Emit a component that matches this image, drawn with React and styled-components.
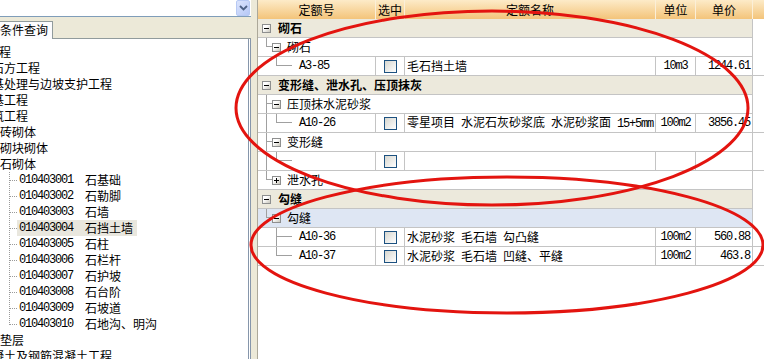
import React from "react";
import styled, { createGlobalStyle } from "styled-components";

const GRID = "#c4c4c4";
const TREE_LINE = "#a0a0a0";

const solid = (x, y, w, h, c = TREE_LINE) =>
  `linear-gradient(${c}, ${c}) ${x} ${y} / ${w} ${h} no-repeat`;
const dots = (dir, x, y, w, h, c = "#9a9a9a") =>
  `repeating-linear-gradient(${dir}, ${c} 0 1px, transparent 1px 2px) ${x} ${y} / ${w} ${h} no-repeat`;

const GlobalStyle = createGlobalStyle`
  html, body { margin: 0; padding: 0; background: #fff; overflow: hidden; }
  body {
    font-family: "Noto Sans CJK SC", "Liberation Sans", sans-serif;
    font-size: 12px;
    color: #000;
  }
`;

const leftTree = [
  { level: 0, text: "房屋建筑与装饰工程" },
  { level: 1, text: "土石方工程" },
  { level: 1, text: "地基处理与边坡支护工程" },
  { level: 1, text: "桩基工程" },
  { level: 1, text: "砌筑工程" },
  { level: 2, text: "砖砌体" },
  { level: 2, text: "砌块砌体" },
  { level: 2, text: "石砌体" },
  { level: 3, code: "010403001", text: "石基础" },
  { level: 3, code: "010403002", text: "石勒脚" },
  { level: 3, code: "010403003", text: "石墙" },
  { level: 3, code: "010403004", text: "石挡土墙", selected: true },
  { level: 3, code: "010403005", text: "石柱" },
  { level: 3, code: "010403006", text: "石栏杆" },
  { level: 3, code: "010403007", text: "石护坡" },
  { level: 3, code: "010403008", text: "石台阶" },
  { level: 3, code: "010403009", text: "石坡道" },
  { level: 3, code: "010403010", text: "石地沟、明沟", last: true },
  { level: 2, text: "垫层" },
  { level: 1, text: "混凝土及钢筋混凝土工程" },
];

const indents = { 0: -97, 1: -20, 2: 0 };

const rows = [
  { kind: "group", text: "砌石" },
  { kind: "sub", text: "砌石", rail: "L" },
  { kind: "leaf", rails: [null, "L"], code: "A3-85", name: ["毛石挡土墙"], unit: "10m3", price: "1244.61" },
  { kind: "group", text: "变形缝、泄水孔、压顶抹灰" },
  { kind: "sub", text: "压顶抹水泥砂浆", rail: "T" },
  {
    kind: "leaf",
    rails: ["I", "L"],
    code: "A10-26",
    name: ["零星项目", "水泥石灰砂浆底", "水泥砂浆面", "15+5mm"],
    unit: "100m2",
    price: "3856.45",
  },
  { kind: "sub", text: "变形缝", rail: "T" },
  { kind: "leaf", rails: ["I", "L"], code: "", name: [], unit: "", price: "" },
  { kind: "sub", text: "泄水孔", rail: "L", closed: true },
  { kind: "group", text: "勾缝" },
  { kind: "sub", text: "勾缝", rail: "L", tone: "blue" },
  { kind: "leaf", rails: [null, "T"], code: "A10-36", name: ["水泥砂浆", "毛石墙", "勾凸缝"], unit: "100m2", price: "560.88" },
  { kind: "leaf", rails: [null, "L"], code: "A10-37", name: ["水泥砂浆", "毛石墙", "凹缝、平缝"], unit: "100m2", price: "463.8" },
];

const Mono = styled.span`
  font-family: "Liberation Mono", "DejaVu Sans Mono", monospace;
  font-size: 12px;
  letter-spacing: -1.2px;
`;

const Name = ({ parts }) =>
  parts.map((p, i) => (
    <React.Fragment key={i}>
      {i > 0 && <S.Gap />}
      {/^[\x00-\x7f]+$/.test(p) ? <Mono>{p}</Mono> : p}
    </React.Fragment>
  ));

const Chevron = () => (
  <svg width="9" height="6" viewBox="0 0 9 6">
    <path d="M1 1 L4.5 4.5 L8 1" fill="none" stroke="#4d6185" strokeWidth="1.8" />
  </svg>
);

const LeftTree = () => (
  <S.TreeBox>
    {leftTree.map((item, i) =>
      item.level === 3 ? (
        <S.TreeItem key={i}>
          <S.DotRail $last={item.last} />
          <S.Label $selected={item.selected}>
            <S.Code>{item.code}</S.Code>
            {item.text}
          </S.Label>
        </S.TreeItem>
      ) : (
        <S.TreeItem key={i} $indent={indents[item.level]}>
          {item.text}
        </S.TreeItem>
      )
    )}
  </S.TreeBox>
);

const GridRow = ({ row }) => {
  if (row.kind === "group") {
    return (
      <S.Row $tone="group" $bold>
        <S.Toggle />
        <S.RowText $gap={7}>{row.text}</S.RowText>
      </S.Row>
    );
  }
  if (row.kind === "sub") {
    return (
      <S.Row $tone={row.tone || "plain"}>
        <S.Rail $w={10} $shape={row.rail} />
        <S.Toggle $plus={row.closed} />
        <S.RowText $gap={6}>{row.text}</S.RowText>
      </S.Row>
    );
  }
  return (
    <S.LeafRow>
      <S.Cell>
        <S.Rail $w={10} $shape={row.rails[0]} />
        <S.Rail $w={20} $shape={row.rails[1]} />
        <S.CodeText>
          <Mono>{row.code}</Mono>
        </S.CodeText>
      </S.Cell>
      <S.Cell $align="center">
        <S.Check />
      </S.Cell>
      <S.Cell>
        <S.NameText>
          <Name parts={row.name} />
        </S.NameText>
      </S.Cell>
      <S.Cell $align="center">
        <Mono>{row.unit}</Mono>
      </S.Cell>
      <S.Cell $align="flex-end">
        <Mono>{row.price}</Mono>
      </S.Cell>
    </S.LeafRow>
  );
};

const App = () => {
  return (
    <>
      <GlobalStyle />
      <S.Page>
        <S.LeftPanel>
          <S.ComboRow>
            <S.ComboField />
            <S.ComboButton>
              <Chevron />
            </S.ComboButton>
          </S.ComboRow>
          <S.TabStrip>
            <S.Tab>条件查询</S.Tab>
            <S.TabFiller />
          </S.TabStrip>
          <LeftTree />
        </S.LeftPanel>
        <S.Splitter />
        <S.RightPanel>
          <S.Header>
            <S.HeadCell>定额号</S.HeadCell>
            <S.HeadCell>选中</S.HeadCell>
            <S.HeadCell>定额名称</S.HeadCell>
            <S.HeadCell>单位</S.HeadCell>
            <S.HeadCell>单价</S.HeadCell>
          </S.Header>
          {rows.map((row, i) => (
            <GridRow key={i} row={row} />
          ))}
        </S.RightPanel>
      </S.Page>
      <S.Marks width="764" height="359" viewBox="0 0 764 359">
        <ellipse cx="492" cy="108" rx="256" ry="97" fill="none" stroke="#e3140f" strokeWidth="3" />
        <ellipse cx="507" cy="245" rx="256" ry="68" fill="none" stroke="#e3140f" strokeWidth="3" />
      </S.Marks>
    </>
  );
};

export default App;

const railBg = (shape, w) => {
  if (shape === "I") return solid("4px", "0", "1px", "100%");
  if (shape === "T")
    return [solid("4px", "0", "1px", "100%"), solid("4px", "8px", `${w - 4}px`, "1px")].join(", ");
  if (shape === "L")
    return [solid("4px", "0", "1px", "9px"), solid("4px", "8px", `${w - 4}px`, "1px")].join(", ");
  return "none";
};

const tones = {
  group: "#ece9dc",
  plain: "#fff",
  blue: "#dee6f3",
};

const S = {
  Page: styled.div`
    display: flex;
    width: 764px;
    height: 359px;
    overflow: hidden;
    background: #fff;
  `,
  LeftPanel: styled.div`
    display: flex;
    flex-direction: column;
    width: 251px;
    flex: none;
    background: #ece9d8;
  `,
  ComboRow: styled.div`
    display: flex;
    height: 17px;
    box-sizing: border-box;
    border-bottom: 1px solid #7f9db9;
    background: #fff;
  `,
  ComboField: styled.div`
    flex: 1;
  `,
  ComboButton: styled.div`
    display: flex;
    align-items: center;
    justify-content: center;
    width: 14px;
    margin-right: 1px;
    box-sizing: border-box;
    border: 1px solid #b7c9f4;
    border-radius: 2px;
    background: linear-gradient(135deg, #dbe4fd, #b6c8f6);
  `,
  TabStrip: styled.div`
    display: flex;
    align-items: flex-end;
    height: 22px;
  `,
  Tab: styled.div`
    height: 18px;
    box-sizing: border-box;
    padding: 0 4px 0 0;
    border-top: 1px solid #919b9c;
    border-right: 1px solid #919b9c;
    background: #fcfcfe;
    line-height: 16px;
    white-space: nowrap;
  `,
  TabFiller: styled.div`
    flex: 1;
    height: 1px;
    background: #919b9c;
  `,
  TreeBox: styled.div`
    flex: 1;
    overflow: hidden;
    padding-top: 5px;
    background: #fff;
    border-right: 3px double #8696ab;
  `,
  TreeItem: styled.div`
    display: flex;
    align-items: center;
    height: 16px;
    line-height: 16px;
    white-space: nowrap;
    margin-left: ${({ $indent }) => $indent || 0}px;
  `,
  DotRail: styled.span`
    flex: none;
    width: 17px;
    height: 16px;
    background: ${({ $last }) =>
      [
        dots("to bottom", "9px", "0", "1px", $last ? "9px" : "100%"),
        dots("to right", "10px", "8px", "7px", "1px"),
      ].join(", ")};
  `,
  Label: styled.span`
    display: flex;
    align-items: center;
    height: 16px;
    padding: 0 4px 0 2px;
    background: ${({ $selected }) => ($selected ? "#e9e7de" : "transparent")};
  `,
  Code: styled.span`
    display: inline-block;
    width: 66px;
    font-family: "Liberation Mono", "DejaVu Sans Mono", monospace;
    font-size: 12px;
    letter-spacing: -1.2px;
  `,
  Splitter: styled.div`
    width: 6px;
    flex: none;
    background: #ece9d8;
  `,
  RightPanel: styled.div`
    flex: 1;
    border-left: 1px solid #aca899;
    background: #fff;
  `,
  Header: styled.div`
    display: grid;
    grid-template-columns: 118px 29px 251px 40px 57px;
    height: 19px;
    background: linear-gradient(to bottom, #fdebc8, #f3c47a);
  `,
  HeadCell: styled.div`
    display: flex;
    align-items: center;
    justify-content: center;
    border-right: 1px solid #fbefd8;
    line-height: 19px;
  `,
  Row: styled.div`
    display: flex;
    align-items: center;
    width: 495px;
    height: 19px;
    box-sizing: border-box;
    padding-left: 4px;
    border-bottom: 1px solid ${GRID};
    border-right: 1px solid ${GRID};
    background: ${({ $tone }) => tones[$tone]};
    font-weight: ${({ $bold }) => ($bold ? 700 : 400)};
    line-height: 18px;
    white-space: nowrap;
  `,
  RowText: styled.span`
    margin-left: ${({ $gap }) => $gap}px;
  `,
  Rail: styled.span`
    flex: none;
    align-self: stretch;
    width: ${({ $w }) => $w}px;
    background: ${({ $shape, $w }) => railBg($shape, $w)};
  `,
  Toggle: styled.span`
    flex: none;
    width: 9px;
    height: 9px;
    box-sizing: border-box;
    border: 1px solid #8e8f8f;
    background: ${({ $plus }) =>
      [
        "linear-gradient(#000, #000) 1px 3px / 5px 1px no-repeat",
        $plus && "linear-gradient(#000, #000) 3px 1px / 1px 5px no-repeat",
        "linear-gradient(135deg, #fff 35%, #c9c6bb)",
      ]
        .filter(Boolean)
        .join(", ")};
  `,
  LeafRow: styled.div`
    display: grid;
    grid-template-columns: 118px 29px 251px 40px 57px;
    height: 19px;
    box-sizing: border-box;
    border-bottom: 1px solid ${GRID};
    background: #fff;
    line-height: 18px;
  `,
  Cell: styled.div`
    display: flex;
    align-items: center;
    justify-content: ${({ $align }) => $align || "flex-start"};
    box-sizing: border-box;
    padding: ${({ $align }) => ($align === "flex-end" ? "0 2px 0 0" : "0")};
    border-right: 1px solid ${GRID};
    white-space: nowrap;
    overflow: hidden;
    &:first-child {
      padding-left: 4px;
      align-items: stretch;
    }
  `,
  CodeText: styled.span`
    display: flex;
    align-items: center;
    margin-left: 7px;
  `,
  NameText: styled.span`
    padding-left: 2px;
  `,
  Gap: styled.span`
    display: inline-block;
    width: 6px;
  `,
  Check: styled.span`
    width: 13px;
    height: 13px;
    box-sizing: border-box;
    border: 1px solid #1c5180;
    background: linear-gradient(135deg, #d6d6cf, #fff);
  `,
  Marks: styled.svg`
    position: fixed;
    left: 0;
    top: 0;
    pointer-events: none;
  `,
};
